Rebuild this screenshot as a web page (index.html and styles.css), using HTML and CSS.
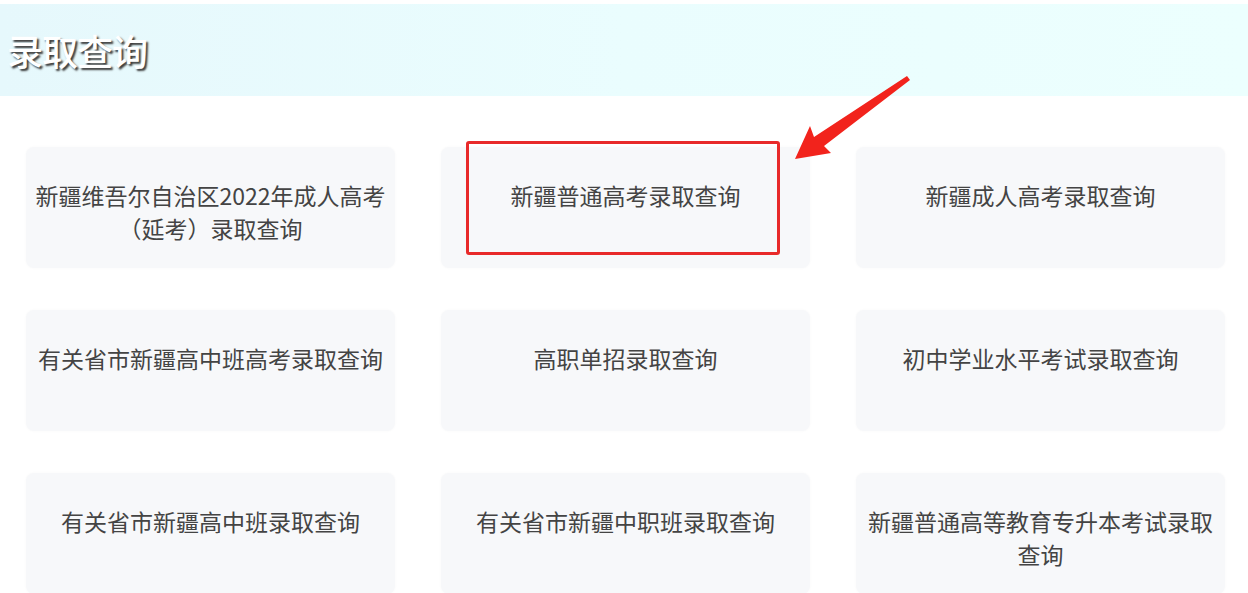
FILE: index.html
```html
<!DOCTYPE html>
<html lang="zh-CN">
<head>
<meta charset="utf-8">
<title>录取查询</title>
<link rel="stylesheet" href="styles.css">
</head>
<body>
<div class="page">
  <header class="banner"><h1 class="banner-title">录取查询</h1></header>
  <main class="grid">
    <a class="card">新疆维吾尔自治区2022年成人高考（延考）录取查询</a>
    <a class="card card-marked">新疆普通高考录取查询<span class="mark-box"></span></a>
    <a class="card">新疆成人高考录取查询</a>
    <a class="card">有关省市新疆高中班高考录取查询</a>
    <a class="card">高职单招录取查询</a>
    <a class="card">初中学业水平考试录取查询</a>
    <a class="card">有关省市新疆高中班录取查询</a>
    <a class="card">有关省市新疆中职班录取查询</a>
    <a class="card">新疆普通高等教育专升本考试录取查询</a>
  </main>
  <svg class="arrow" width="130" height="100" viewBox="780 60 130 100" aria-hidden="true">
    <polygon points="907,76 910,80 824,146 831,153 795,159 810,126 814,137" fill="#f2231c"/>
  </svg>
</div>
</body>
</html>
```
FILE: styles.css
```css
html, body {
  margin: 0;
  padding: 0;
  background: #ffffff;
}
body {
  font-family: "Noto Sans CJK SC", "Noto Sans", sans-serif;
}
.page {
  position: relative;
  width: 1248px;
  height: 593px;
  overflow: hidden;
}
.banner {
  margin-top: 4px;
  height: 92px;
  display: flex;
  align-items: center;
  padding-left: 7px;
  background: linear-gradient(to right, #e6f8fc, #eafdfe 50%, #ecfffe);
}
.banner-title {
  margin: 0;
  font-size: 36px;
  font-weight: 500;
  line-height: 1;
  color: #ffffff;
  letter-spacing: -1px;
  text-shadow: 2px 2px 2px #3a3a3a;
}
.grid {
  display: grid;
  grid-template-columns: repeat(3, 369px);
  column-gap: 46px;
  row-gap: 42px;
  padding: 51px 23px 0 26px;
}
.card {
  position: relative;
  display: block;
  min-height: 121px;
  box-sizing: border-box;
  padding: 32px 6px 0;
  background: #f7f8fa;
  border-radius: 8px;
  box-shadow: 0 0 3px rgba(0, 0, 0, 0.03);
  font-size: 23px;
  line-height: 33px;
  color: #444444;
  text-align: center;
  text-decoration: none;
}
.mark-box {
  position: absolute;
  left: 25px;
  top: -6px;
  width: 314px;
  height: 114px;
  box-sizing: border-box;
  border: 3px solid #e82a2a;
  border-radius: 3px;
}
.arrow {
  position: absolute;
  left: 780px;
  top: 60px;
}
```
